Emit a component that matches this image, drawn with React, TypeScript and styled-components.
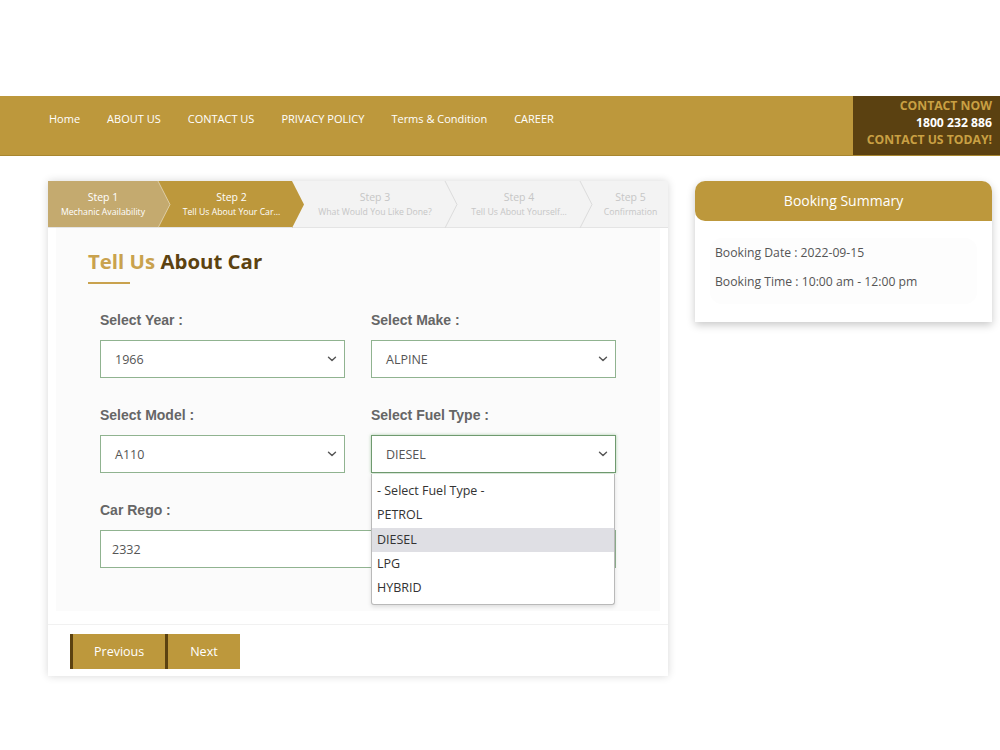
import React from "react";
import styled, { createGlobalStyle } from "styled-components";

const GOLD = "#bd983c";
const BROWN = "#5c4210";

const Global = createGlobalStyle`
  html, body { margin: 0; padding: 0; background: #fff; }
  body { font-family: "Open Sans", "Liberation Sans", sans-serif; }
  * { box-sizing: border-box; }
`;

const Page = styled.div`
  width: 1000px;
  min-height: 750px;
  padding-top: 96px;
`;

const Header = styled.header`
  height: 60px;
  background: ${GOLD};
  border-bottom: 1px solid #a8862f;
  display: flex;
  align-items: stretch;
  justify-content: space-between;
`;

const Nav = styled.nav`
  display: flex;
  align-items: center;
  gap: 27px;
  padding-left: 49px;
  padding-bottom: 15px;
`;

const NavLink = styled.a`
  color: #fff;
  font-size: 11px;
  text-decoration: none;
  white-space: nowrap;
`;

const ContactBox = styled.div`
  width: 147px;
  background: #5b4111;
  display: flex;
  flex-direction: column;
  align-items: flex-end;
  justify-content: flex-start;
  padding: 1px 8px 0 0;
  font-size: 12.2px;
  font-weight: 700;
  line-height: 17px;
`;

const ContactLine = styled.span<{ $white?: boolean }>`
  color: ${(p) => (p.$white ? "#fff" : "#c9a043")};
  white-space: nowrap;
`;

const Main = styled.main`
  display: flex;
  align-items: flex-start;
  gap: 27px;
  padding: 25px 8px 0 48px;
`;

const Card = styled.section`
  width: 620px;
  background: #fff;
  box-shadow: 0 0 8px rgba(0, 0, 0, 0.16);
  border-radius: 3px 4px 0 0;
  padding-bottom: 7px;
`;

const Steps = styled.div`
  display: flex;
  height: 47px;
  background: #f3f3f3;
  border-bottom: 1px solid #e4e4e4;
`;

const Step = styled.div<{ $w: number; $bg: string; $z: number; $first?: boolean; $color: string }>`
  position: relative;
  z-index: ${(p) => p.$z};
  width: ${(p) => p.$w}px;
  flex: none;
  background: ${(p) => p.$bg};
  color: ${(p) => p.$color};
  padding-left: ${(p) => (p.$first ? 0 : 13)}px;
  display: flex;
  flex-direction: column;
  align-items: center;
  justify-content: center;
  text-align: center;
`;

const StepTitle = styled.span`
  font-size: 10.5px;
  line-height: 15px;
`;

const StepSub = styled.span`
  font-size: 8.7px;
  line-height: 14px;
  white-space: nowrap;
`;

const Tip = styled.svg`
  position: absolute;
  top: 0;
  right: -12px;
  width: 12px;
  height: 47px;
  overflow: visible;
`;

const Panel = styled.div`
  background: #fbfbfb;
  margin: 0 8px;
  padding: 19px 44px 43px 44px;
`;

const Title = styled.h2`
  margin: 0 0 0 -12px;
  font-size: 20.4px;
  line-height: 28px;
  font-weight: 700;
  color: ${BROWN};
`;

const TitleAccent = styled.span`
  color: #c9a24e;
`;

const TitleRule = styled.div`
  width: 42px;
  height: 2px;
  background: #c9a24e;
  margin: 7px 0 26px -12px;
`;

const Grid = styled.div`
  display: grid;
  grid-template-columns: 245px 245px;
  column-gap: 26px;
  row-gap: 27px;
`;

const Field = styled.div<{ $full?: boolean }>`
  position: relative;
  grid-column: ${(p) => (p.$full ? "1 / span 2" : "auto")};
`;

const Label = styled.div`
  font-family: "Liberation Sans", Arial, sans-serif;
  font-weight: 700;
  font-size: 14px;
  line-height: 20px;
  color: #666;
  margin-bottom: 10px;
`;

const SelectBox = styled.div<{ $focus?: boolean }>`
  height: 38px;
  background: #fff;
  border: 1px solid ${(p) => (p.$focus ? "#6f9a6f" : "#90b390")};
  box-shadow: ${(p) => (p.$focus ? "0 0 3px rgba(110, 170, 110, 0.6)" : "none")};
  display: flex;
  align-items: center;
  justify-content: space-between;
  padding: 0 7px 0 14px;
  font-size: 12.5px;
  color: #555;
`;

const Input = styled.div`
  height: 38px;
  background: #fff;
  border: 1px solid #90b390;
  display: flex;
  align-items: center;
  padding: 0 11px;
  font-size: 12.5px;
  color: #555;
`;

const Dropdown = styled.ul`
  position: absolute;
  left: 0;
  top: 69px;
  width: 244px;
  margin: 0;
  padding: 5px 0 4px;
  list-style: none;
  background: #fff;
  border: 1px solid #b9b9b9;
  border-top: none;
  border-radius: 0 0 3px 3px;
  box-shadow: 0 2px 4px rgba(0, 0, 0, 0.12);
  z-index: 10;
`;

const Option = styled.li<{ $active?: boolean }>`
  height: 24.25px;
  line-height: 24px;
  padding-left: 5px;
  font-size: 12.5px;
  color: #333;
  background: ${(p) => (p.$active ? "#dfdfe4" : "transparent")};
`;

const Footer = styled.div`
  margin-top: 13px;
  border-top: 1px solid #f1f1f1;
  padding: 9px 0 0 22px;
  display: flex;
`;

const Button = styled.button<{ $px: number }>`
  height: 35px;
  border: none;
  border-left: 3px solid ${BROWN};
  background: ${GOLD};
  color: #fff;
  font-family: "Open Sans", sans-serif;
  font-size: 12.5px;
  padding: 0 ${(p) => p.$px}px;
  cursor: pointer;
`;

const Summary = styled.aside`
  width: 297px;
  background: #fff;
  border-radius: 10px 10px 0 0;
  box-shadow: 0 3px 8px rgba(0, 0, 0, 0.22);
  padding-bottom: 18px;
`;

const SummaryHead = styled.div`
  height: 40px;
  background: ${GOLD};
  border-radius: 10px 10px 0 10px;
  color: #fff;
  font-size: 14px;
  display: flex;
  align-items: center;
  justify-content: center;
  padding-bottom: 1px;
`;

const SummaryBody = styled.div`
  margin: 17px 15px 0 15px;
  background: #fdfdfd;
  border-radius: 12px;
  padding: 5px 6px 12px 5px;
`;

const SummaryLine = styled.div`
  font-size: 12.2px;
  line-height: 20px;
  color: #555;
  & + & {
    margin-top: 9px;
  }
`;

const Chevron = () => (
  <svg width="10" height="6" viewBox="0 0 10 6" fill="none">
    <path d="M1.5 1.2 L5 4.6 L8.5 1.2" stroke="#555" strokeWidth="1.4" strokeLinecap="round" strokeLinejoin="round" />
  </svg>
);

type StepData = { title: string; sub: string; w: number; bg: string; color: string; line?: string };

const steps: StepData[] = [
  { title: "Step 1", sub: "Mechanic Availability", w: 110, bg: "#c4aa6f", color: "#fff", line: "rgba(255,255,255,0.45)" },
  { title: "Step 2", sub: "Tell Us About Your Car...", w: 134, bg: GOLD, color: "#fff" },
  { title: "Step 3", sub: "What Would You Like Done?", w: 153, bg: "#f3f3f3", color: "#c6c6c6", line: "#dcdcdc" },
  { title: "Step 4", sub: "Tell Us About Yourself...", w: 135, bg: "#f3f3f3", color: "#c6c6c6", line: "#dcdcdc" },
  { title: "Step 5", sub: "Confirmation", w: 88, bg: "#f3f3f3", color: "#c6c6c6" },
];

const navItems = ["Home", "ABOUT US", "CONTACT US", "PRIVACY POLICY", "Terms & Condition", "CAREER"];

export default function App() {
  return (
    <Page>
      <Global />
      <Header>
        <Nav>
          {navItems.map((n) => (
            <NavLink key={n} href="#">
              {n}
            </NavLink>
          ))}
        </Nav>
        <ContactBox>
          <ContactLine>CONTACT NOW</ContactLine>
          <ContactLine $white>1800 232 886</ContactLine>
          <ContactLine>CONTACT US TODAY!</ContactLine>
        </ContactBox>
      </Header>
      <Main>
        <Card>
          <Steps>
            {steps.map((s, i) => (
              <Step key={s.title} $w={s.w} $bg={s.bg} $color={s.color} $z={10 - i} $first={i === 0}>
                <StepTitle>{s.title}</StepTitle>
                <StepSub>{s.sub}</StepSub>
                {i < steps.length - 1 && (
                  <Tip viewBox="0 0 12 47" preserveAspectRatio="none">
                    <polygon points="0,0 12,23.5 0,47" fill={s.bg} />
                    {s.line && <polyline points="0,0 12,23.5 0,47" fill="none" stroke={s.line} strokeWidth="1" />}
                  </Tip>
                )}
              </Step>
            ))}
          </Steps>
          <Panel>
            <Title>
              <TitleAccent>Tell Us</TitleAccent> About Car
            </Title>
            <TitleRule />
            <Grid>
              <Field>
                <Label>Select Year :</Label>
                <SelectBox>
                  <span>1966</span>
                  <Chevron />
                </SelectBox>
              </Field>
              <Field>
                <Label>Select Make :</Label>
                <SelectBox>
                  <span>ALPINE</span>
                  <Chevron />
                </SelectBox>
              </Field>
              <Field>
                <Label>Select Model :</Label>
                <SelectBox>
                  <span>A110</span>
                  <Chevron />
                </SelectBox>
              </Field>
              <Field>
                <Label>Select Fuel Type :</Label>
                <SelectBox $focus>
                  <span>DIESEL</span>
                  <Chevron />
                </SelectBox>
                <Dropdown>
                  <Option>- Select Fuel Type -</Option>
                  <Option>PETROL</Option>
                  <Option $active>DIESEL</Option>
                  <Option>LPG</Option>
                  <Option>HYBRID</Option>
                </Dropdown>
              </Field>
              <Field $full>
                <Label>Car Rego :</Label>
                <Input>2332</Input>
              </Field>
            </Grid>
          </Panel>
          <Footer>
            <Button $px={21}>Previous</Button>
            <Button $px={22}>Next</Button>
          </Footer>
        </Card>
        <Summary>
          <SummaryHead>Booking Summary</SummaryHead>
          <SummaryBody>
            <SummaryLine>Booking Date : 2022-09-15</SummaryLine>
            <SummaryLine>Booking Time : 10:00 am - 12:00 pm</SummaryLine>
          </SummaryBody>
        </Summary>
      </Main>
    </Page>
  );
}
